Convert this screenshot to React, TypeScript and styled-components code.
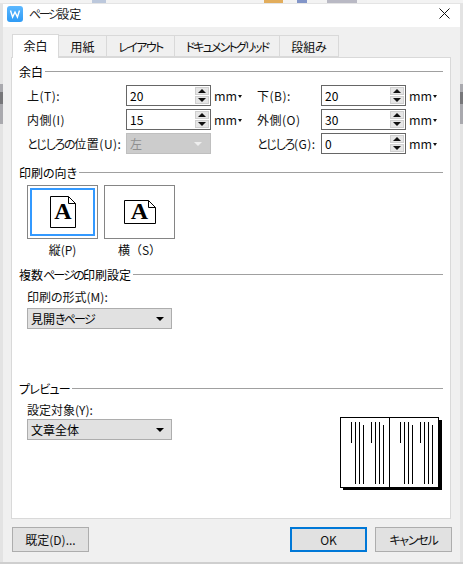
import * as React from "react";
import styled, { createGlobalStyle } from "styled-components";

const GlobalStyle = createGlobalStyle`
  html, body {
    margin: 0;
    padding: 0;
    background: #c8c8c8;
  }
  * {
    box-sizing: border-box;
  }
`;

const Screen = styled.div`
  width: 463px;
  height: 564px;
  display: grid;
  grid-template-columns: 3px 457px 3px;
  grid-template-rows: 4px 558px 2px;
  overflow: hidden;
  background: #cfcfcf;
  color: #000;
  font-family: "Noto Sans CJK JP", "Noto Sans", sans-serif;
  font-size: 12px;
  font-feature-settings: "palt";
`;

const TopStrip = styled.div`
  grid-column: 1 / 4;
  display: flex;
  background: #f3f3f3;
  border-bottom: 1px solid #e4e4e4;
`;

const StripBit = styled.span<{ $w: number; $c: string; $ml: number }>`
  width: ${(p) => p.$w}px;
  margin-left: ${(p) => p.$ml}px;
  background: ${(p) => p.$c};
`;

const SideStrip = styled.div`
  background: #e3e3e3;
  padding-top: 80px;
`;

const ScrollThumb = styled.div`
  height: 40px;
  background: #a9a9ae;
  padding-top: 8px;
  &::before {
    content: "";
    display: block;
    height: 12px;
    background: #77777a;
  }
`;

const Dialog = styled.div`
  background: #f0f0f0;
  display: flex;
  flex-direction: column;
`;

const TitleBar = styled.div`
  height: 23px;
  background: #fff;
  display: flex;
  align-items: center;
  padding: 0 10px 4px 4px;
  gap: 6px;
`;

const Title = styled.span`
  flex: 1;
  color: #1a1a1a;
`;

// the kana of the original UI font are narrower than the Noto ones
const Kana = styled.span<{ $s?: number }>`
  letter-spacing: ${(p) => p.$s ?? -1.8}px;
`;

const TabBar = styled.div`
  display: flex;
  align-items: flex-end;
  height: 23px;
  margin-top: 7px;
  padding-left: 9px;
  position: relative;
  z-index: 1;
`;

const Tab = styled.div<{ $w: number; $active?: boolean }>`
  width: ${(p) => p.$w}px;
  height: ${(p) => (p.$active ? 24 : 22)}px;
  margin-bottom: ${(p) => (p.$active ? -1 : 0)}px;
  padding-bottom: ${(p) => (p.$active ? 2 : 0)}px;
  display: flex;
  align-items: center;
  justify-content: center;
  background: ${(p) => (p.$active ? "#fff" : "#f0f0f0")};
  border: 1px solid #d9d9d9;
  border-left-width: ${(p) => (p.$active ? 1 : 0)}px;
  border-bottom: ${(p) => (p.$active ? "none" : "1px solid #d9d9d9")};
  color: #111;
`;

const Panel = styled.div`
  width: 440px;
  height: 462px;
  margin-left: 8px;
  background: #fff;
  border: 1px solid #d9d9d9;
  padding: 5px 7px 0;
`;

const Legend = styled.div<{ $mt?: number }>`
  display: flex;
  align-items: center;
  height: 16px;
  gap: 2px;
  margin-top: ${(p) => p.$mt ?? 0}px;
  &::after {
    content: "";
    flex: 1;
    height: 1px;
    background: #a0a0a0;
  }
`;

const FieldGrid = styled.div`
  display: grid;
  grid-template-columns: 99px 85px 46px 64px 85px 37px;
  grid-auto-rows: 21px;
  row-gap: 3px;
  margin: 6px 0 0 8px;
  align-items: center;
`;

const FieldLabel = styled.span`
  white-space: nowrap;
  color: #111;
  letter-spacing: 0.5px;
`;

const Spinner = styled.div`
  height: 21px;
  border: 1px solid #666;
  background: #fff;
  display: flex;
  align-items: center;
  justify-content: space-between;
  padding: 1px 1px 1px 3px;
`;

const SpinButtons = styled.div`
  width: 14px;
  height: 17px;
  display: flex;
  flex-direction: column;
  gap: 1px;
`;

const SpinButton = styled.div<{ $down?: boolean }>`
  flex: 1;
  background: #e6e6e6;
  border: 1px solid #cfcfcf;
  display: flex;
  align-items: center;
  justify-content: center;
  &::before {
    content: "";
    border-left: 4px solid transparent;
    border-right: 4px solid transparent;
    ${(p) =>
      p.$down
        ? "border-top: 4px solid #111;"
        : "border-bottom: 4px solid #111;"}
  }
`;

const Unit = styled.div`
  display: flex;
  align-items: center;
  gap: 1px;
  padding-left: 3px;
  font-size: 12.5px;
  color: #111;
  &::after {
    content: "";
    margin-top: 1px;
    border-left: 2.5px solid transparent;
    border-right: 2.5px solid transparent;
    border-top: 3px solid #111;
  }
`;

const DisabledSelect = styled.div`
  height: 21px;
  background: #ccc;
  border: 1px solid #bfbfbf;
  color: #8f8f8f;
  display: flex;
  align-items: center;
  justify-content: space-between;
  padding: 0 8px 0 3px;
  &::after {
    content: "";
    border-left: 4px solid transparent;
    border-right: 4px solid transparent;
    border-top: 4px solid #eee;
  }
`;

const OrientationRow = styled.div`
  display: flex;
  gap: 6px;
  margin: 5px 0 0 8px;
`;

const OrientationOption = styled.div`
  width: 71px;
  display: flex;
  flex-direction: column;
  align-items: center;
`;

const OrientationBox = styled.div<{ $focused?: boolean }>`
  width: 71px;
  height: 54px;
  border: 1px solid #858585;
  background: #fff;
  display: flex;
  align-items: center;
  justify-content: center;
  ${(p) =>
    p.$focused
      ? "box-shadow: inset 0 0 0 2px #fff, inset 0 0 0 4px #3399ff;"
      : ""}
`;

const OrientationLabel = styled.div<{ $fullWidth?: boolean }>`
  height: 16px;
  line-height: 16px;
  margin-top: 3px;
  color: #111;
  white-space: nowrap;
  ${(p) => (p.$fullWidth ? "font-feature-settings: normal;" : "")}
`;

const Field = styled.div<{ $mt: number }>`
  margin: ${(p) => p.$mt}px 0 0 8px;
  width: 145px;
`;

const CaptionLabel = styled.div<{ $mb: number }>`
  height: 16px;
  line-height: 16px;
  margin-bottom: ${(p) => p.$mb}px;
  color: #111;
`;

const Select = styled.div`
  height: 21px;
  background: #e1e1e1;
  border: 1px solid #adadad;
  display: flex;
  align-items: center;
  justify-content: space-between;
  padding: 0 7px 0 3px;
  &::after {
    content: "";
    border-left: 4px solid transparent;
    border-right: 4px solid transparent;
    border-top: 4px solid #000;
  }
`;

const PreviewRow = styled.div`
  display: flex;
  justify-content: space-between;
  align-items: flex-start;
`;

const PreviewDrawing = styled.svg`
  display: block;
  margin: 21px 1px 0 0;
`;

const Footer = styled.div`
  display: flex;
  justify-content: space-between;
  margin-top: 8px;
  padding: 0 8px 0 9px;
`;

const ButtonGroup = styled.div`
  display: flex;
  gap: 8px;
`;

const Button = styled.div<{ $primary?: boolean }>`
  width: 77px;
  height: 25px;
  background: #e1e1e1;
  border: ${(p) => (p.$primary ? "2px solid #0078d7" : "1px solid #adadad")};
  display: flex;
  align-items: center;
  justify-content: center;
  color: #111;
`;

const AppIcon = () => (
  <svg width="16" height="16" viewBox="0 0 16 16">
    <defs>
      <linearGradient id="w" x1="0" y1="0" x2="0" y2="1">
        <stop offset="0" stopColor="#5cb8ff" />
        <stop offset="1" stopColor="#2f9bf5" />
      </linearGradient>
    </defs>
    <rect width="16" height="16" rx="3" fill="url(#w)" />
    <path d="M3.5 4.5 L5.6 11 L8 6 L10.4 11 L12.5 4.5" fill="none" stroke="#fff" strokeWidth="1.4" />
  </svg>
);

const CloseIcon = () => (
  <svg width="11" height="11" viewBox="0 0 11 11">
    <path d="M0.5 0.5 L10.5 10.5 M10.5 0.5 L0.5 10.5" stroke="#111" strokeWidth="1" fill="none" />
  </svg>
);

const PortraitIcon = () => (
  <svg width="26" height="32" viewBox="0 0 26 32">
    <path d="M0.5 0.5 H18.5 L25.5 7.5 V31.5 H0.5 Z M18.5 0.5 V7.5 H25.5" fill="#fff" stroke="#000" strokeWidth="1" />
    <text x="13" y="23" fontFamily="Liberation Serif" fontWeight="bold" fontSize="24" textAnchor="middle">A</text>
  </svg>
);

const LandscapeIcon = () => (
  <svg width="32" height="30" viewBox="0 -3 32 30">
    <path d="M0.5 0.5 H24.5 L31.5 7.5 V23.5 H0.5 Z M24.5 0.5 V7.5 H31.5" fill="#fff" stroke="#000" strokeWidth="1" />
    <text x="15.5" y="19" fontFamily="Liberation Serif" fontWeight="bold" fontSize="24" textAnchor="middle">A</text>
  </svg>
);

// x of each text line on the preview pages, y start and end
const previewLines = [
  [11.5, 5, 26], [15.5, 5, 67], [19.5, 5, 67], [23.5, 8, 67],
  [31.5, 5, 26], [35.5, 5, 67], [39.5, 5, 67], [43.5, 8, 67],
  [60.5, 5, 26], [64.5, 5, 67], [68.5, 5, 67], [72.5, 8, 67],
  [80.5, 5, 26], [84.5, 5, 67], [88.5, 5, 67], [92.5, 8, 67],
];

const PagePreview = () => (
  <PreviewDrawing width="102" height="73" viewBox="0 0 102 73">
    <rect x="3" y="3" width="99" height="70" fill="#000" />
    <rect x="0.5" y="0.5" width="98" height="70" fill="#fff" stroke="#000" />
    <line x1="49.5" y1="0" x2="49.5" y2="71" stroke="#000" />
    {previewLines.map(([x, y1, y2]) => (
      <line key={x} x1={x} y1={y1} x2={x} y2={y2} stroke="#000" />
    ))}
  </PreviewDrawing>
);

const NumberField = ({ value }: { value: string }) => (
  <Spinner>
    {value}
    <SpinButtons>
      <SpinButton />
      <SpinButton $down />
    </SpinButtons>
  </Spinner>
);

export default function App() {
  return (
    <Screen>
      <GlobalStyle />
      <TopStrip>
        <StripBit $ml={92} $w={14} $c="#bcc8dc" />
        <StripBit $ml={158} $w={19} $c="#e2ad5c" />
        <StripBit $ml={14} $w={10} $c="#8295c8" />
        <StripBit $ml={20} $w={30} $c="#b9b9c4" />
      </TopStrip>
      <SideStrip>
        <ScrollThumb />
      </SideStrip>
      <Dialog>
        <TitleBar>
          <AppIcon />
          <Title><Kana $s={-2.4}>ページ</Kana>設定</Title>
          <CloseIcon />
        </TitleBar>
        <TabBar>
          <Tab $w={47} $active>余白</Tab>
          <Tab $w={48}>用紙</Tab>
          <Tab $w={68}><Kana $s={-1.6}>レイアウト</Kana></Tab>
          <Tab $w={105}><Kana>ドキュメントグリッド</Kana></Tab>
          <Tab $w={59}>段組み</Tab>
        </TabBar>
        <Panel>
          <Legend>余白</Legend>
          <FieldGrid>
            <FieldLabel>上(T):</FieldLabel>
            <NumberField value="20" />
            <Unit>mm</Unit>
            <FieldLabel>下(B):</FieldLabel>
            <NumberField value="20" />
            <Unit>mm</Unit>
            <FieldLabel>内側(I)</FieldLabel>
            <NumberField value="15" />
            <Unit>mm</Unit>
            <FieldLabel>外側(O)</FieldLabel>
            <NumberField value="30" />
            <Unit>mm</Unit>
            <FieldLabel><Kana $s={-1.2}>とじしろの</Kana>位置(U):</FieldLabel>
            <DisabledSelect>左</DisabledSelect>
            <span />
            <FieldLabel><Kana $s={-1.2}>とじしろ</Kana>(G):</FieldLabel>
            <NumberField value="0" />
            <Unit>mm</Unit>
          </FieldGrid>
          <Legend $mt={10}>印刷の向き</Legend>
          <OrientationRow>
            <OrientationOption>
              <OrientationBox $focused>
                <PortraitIcon />
              </OrientationBox>
              <OrientationLabel>縦(P)</OrientationLabel>
            </OrientationOption>
            <OrientationOption>
              <OrientationBox>
                <LandscapeIcon />
              </OrientationBox>
              <OrientationLabel $fullWidth>横（S）</OrientationLabel>
            </OrientationOption>
          </OrientationRow>
          <Legend $mt={8}><span>複数<Kana>ページの</Kana>印刷設定</span></Legend>
          <Field $mt={7}>
            <CaptionLabel $mb={3}>印刷の形式(M):</CaptionLabel>
            <Select><span>見開<Kana>きページ</Kana></span></Select>
          </Field>
          <Legend $mt={51}><Kana $s={-0.7}>プレビュー</Kana></Legend>
          <PreviewRow>
            <Field $mt={6}>
              <CaptionLabel $mb={1}>設定対象(Y):</CaptionLabel>
              <Select>文章全体</Select>
            </Field>
            <PagePreview />
          </PreviewRow>
        </Panel>
        <Footer>
          <Button>既定(D)...</Button>
          <ButtonGroup>
            <Button $primary>OK</Button>
            <Button><Kana $s={-1.2}>キャンセル</Kana></Button>
          </ButtonGroup>
        </Footer>
      </Dialog>
      <SideStrip>
        <ScrollThumb />
      </SideStrip>
    </Screen>
  );
}
